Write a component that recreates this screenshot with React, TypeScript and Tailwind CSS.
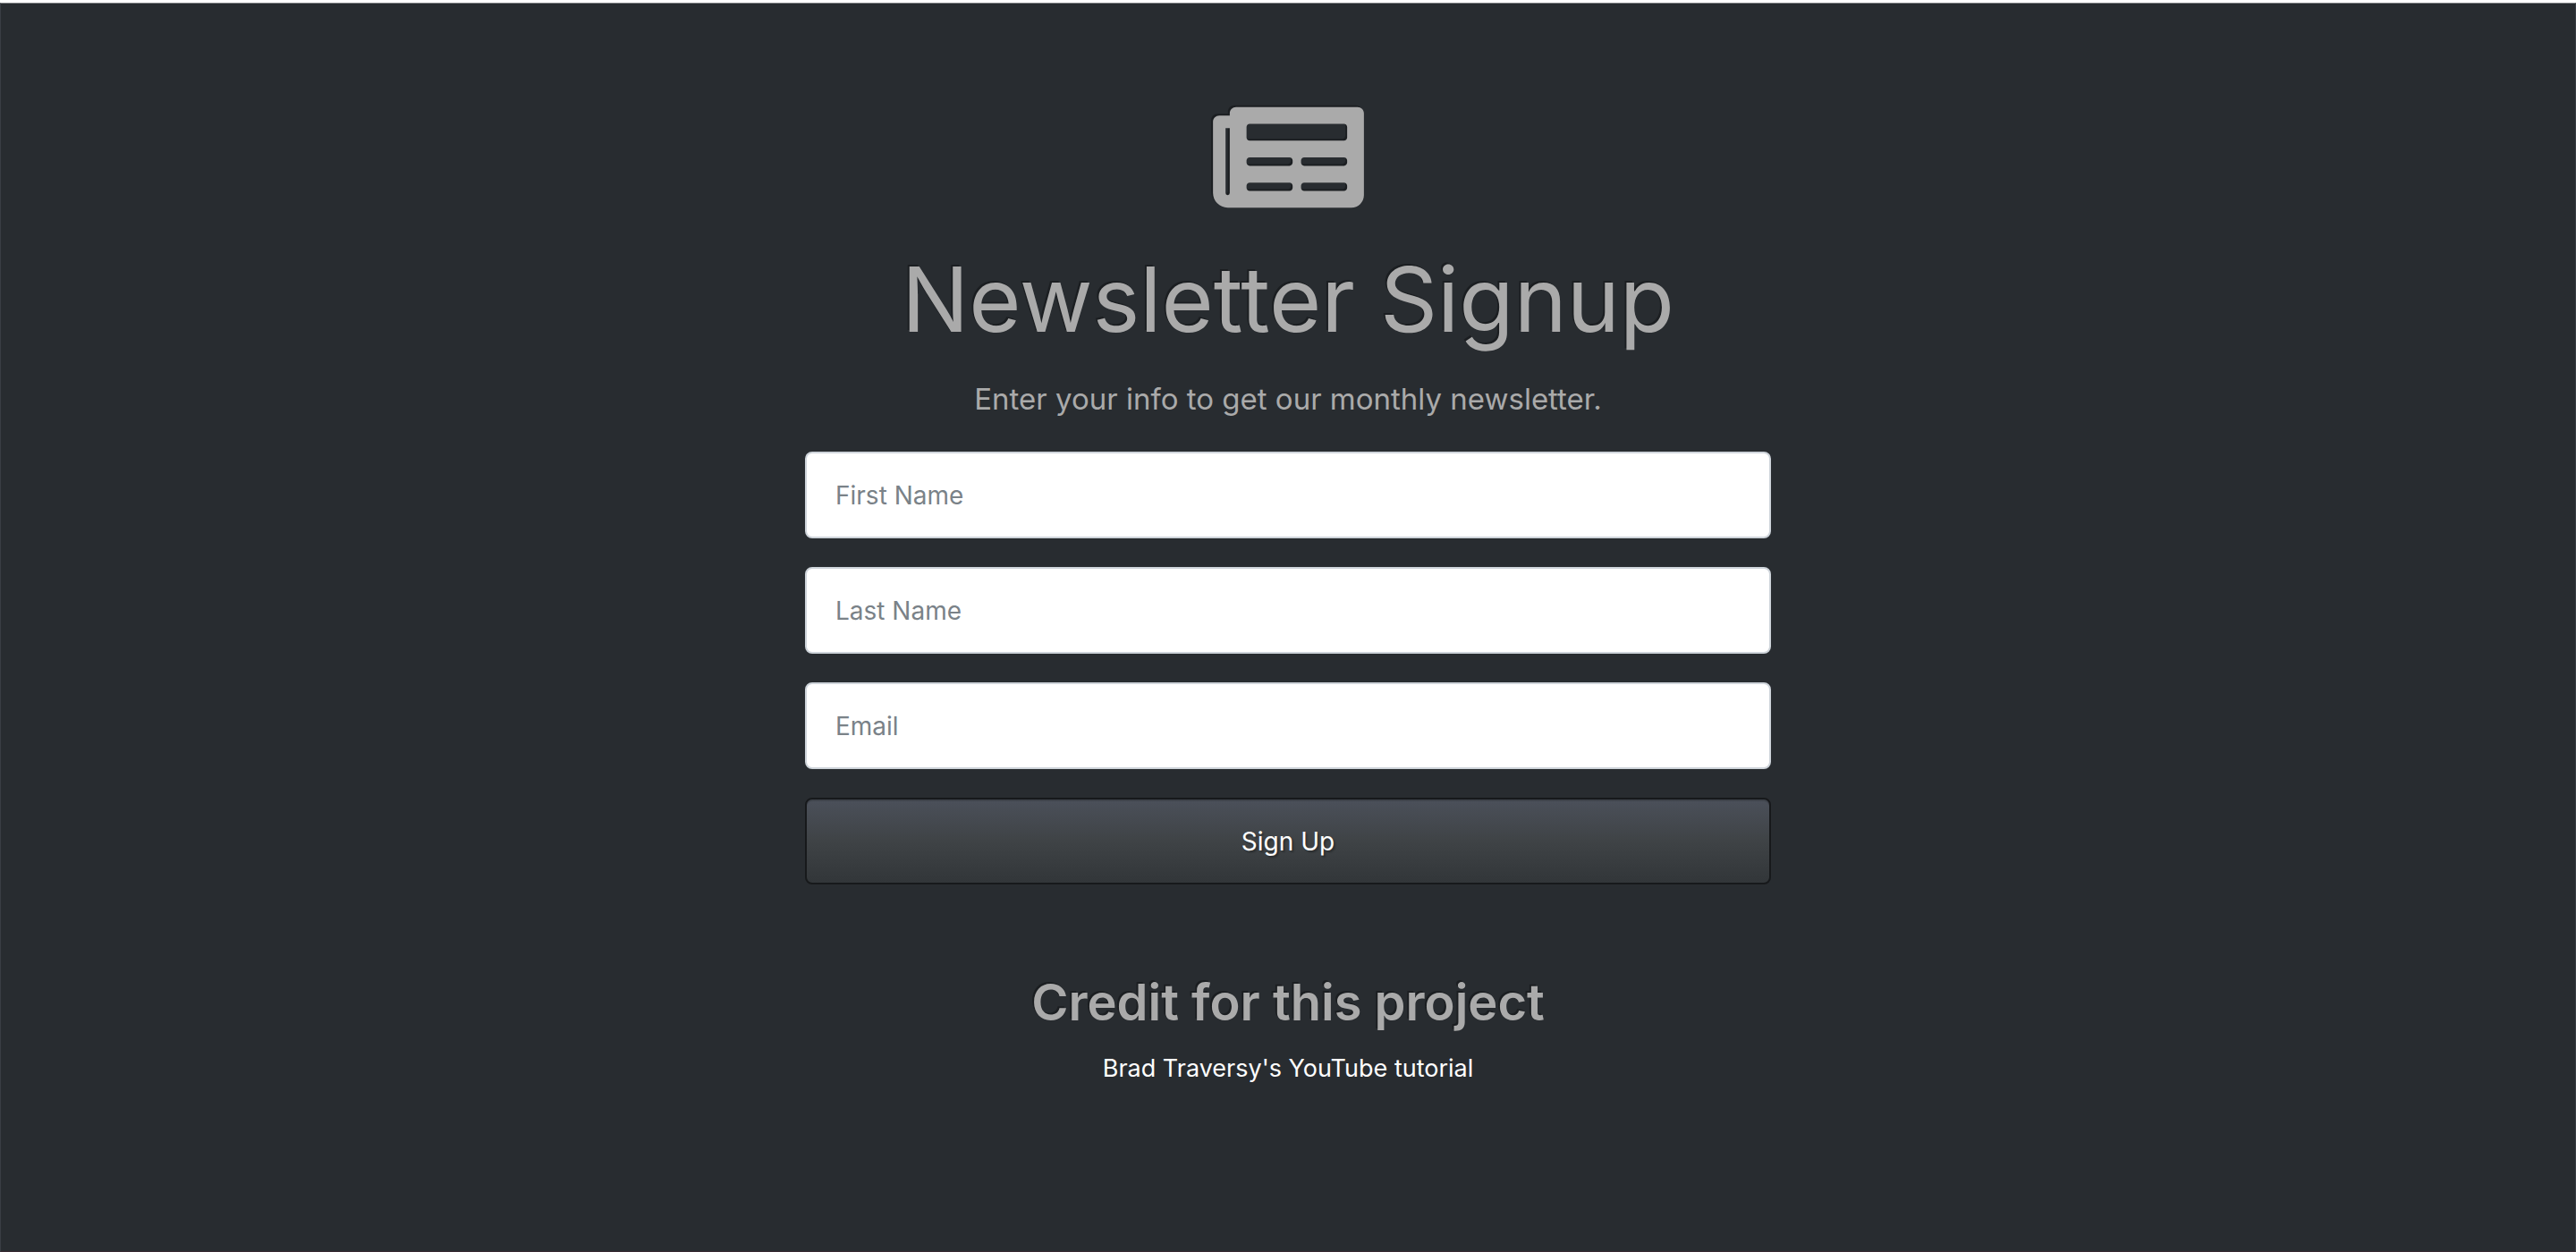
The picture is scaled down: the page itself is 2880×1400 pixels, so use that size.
import { FaNewspaper } from "react-icons/fa";

const fields = [
  { id: "firstName", label: "First Name", type: "text" },
  { id: "lastName", label: "Last Name", type: "text" },
  { id: "email", label: "Email", type: "email" },
];

export default function App() {
  return (
    <div className="min-h-screen border-t-3 border-white bg-[#282c30] font-['Inter',sans-serif] text-[#aaaaaa]">
      <main className="flex min-h-[calc(100vh-3px)] flex-col items-center border border-x-[#3a3e44] border-t-[#7f8285] border-b-[#382a32] px-8 pt-[97px] pb-16 text-center">
        <FaNewspaper
          aria-hidden="true"
          className="h-[150px] w-[169px] drop-shadow-[-2px_-2px_0_rgba(0,0,0,0.3)]"
        />
        <form
          className="flex w-full max-w-[1080px] flex-col"
          onSubmit={(event) => event.preventDefault()}
        >
          <h1 className="mt-4 text-[100px] leading-[136px] font-normal [text-shadow:-2px_-2px_0_rgba(0,0,0,0.3)]">
            Newsletter Signup
          </h1>
          <p className="mt-4 mb-8 text-[33px] leading-[54px] font-normal">
            Enter your info to get our monthly newsletter.
          </p>
          <div className="flex flex-col gap-8">
            {fields.map((field) => (
              <input
                key={field.id}
                id={field.id}
                name={field.id}
                type={field.type}
                aria-label={field.label}
                placeholder={field.label}
                className="h-[97px] w-full rounded-lg border-2 border-[#ced4da] bg-white px-8 text-[28px] text-[#272b30] placeholder:text-[#7a8288] placeholder:opacity-100"
              />
            ))}
            <button
              type="submit"
              className="h-[97px] w-full rounded-lg border-2 border-[#17191b] bg-linear-to-b from-[#4b505a] via-[#3f4346] to-[#323639] text-[28px] text-white shadow-[inset_0_2px_0_rgba(0,0,0,0.15)] [text-shadow:2px_2px_2px_rgba(0,0,0,0.3)]"
            >
              Sign Up
            </button>
          </div>
        </form>
        <h2 className="mt-24 text-[56px] leading-[72px] font-semibold [text-shadow:-2px_-2px_0_rgba(0,0,0,0.3)]">
          Credit for this project
        </h2>
        <a href="#tutorial" className="mt-4 text-[27px] leading-[44px] text-white">
          Brad Traversy's YouTube tutorial
        </a>
      </main>
    </div>
  );
}
